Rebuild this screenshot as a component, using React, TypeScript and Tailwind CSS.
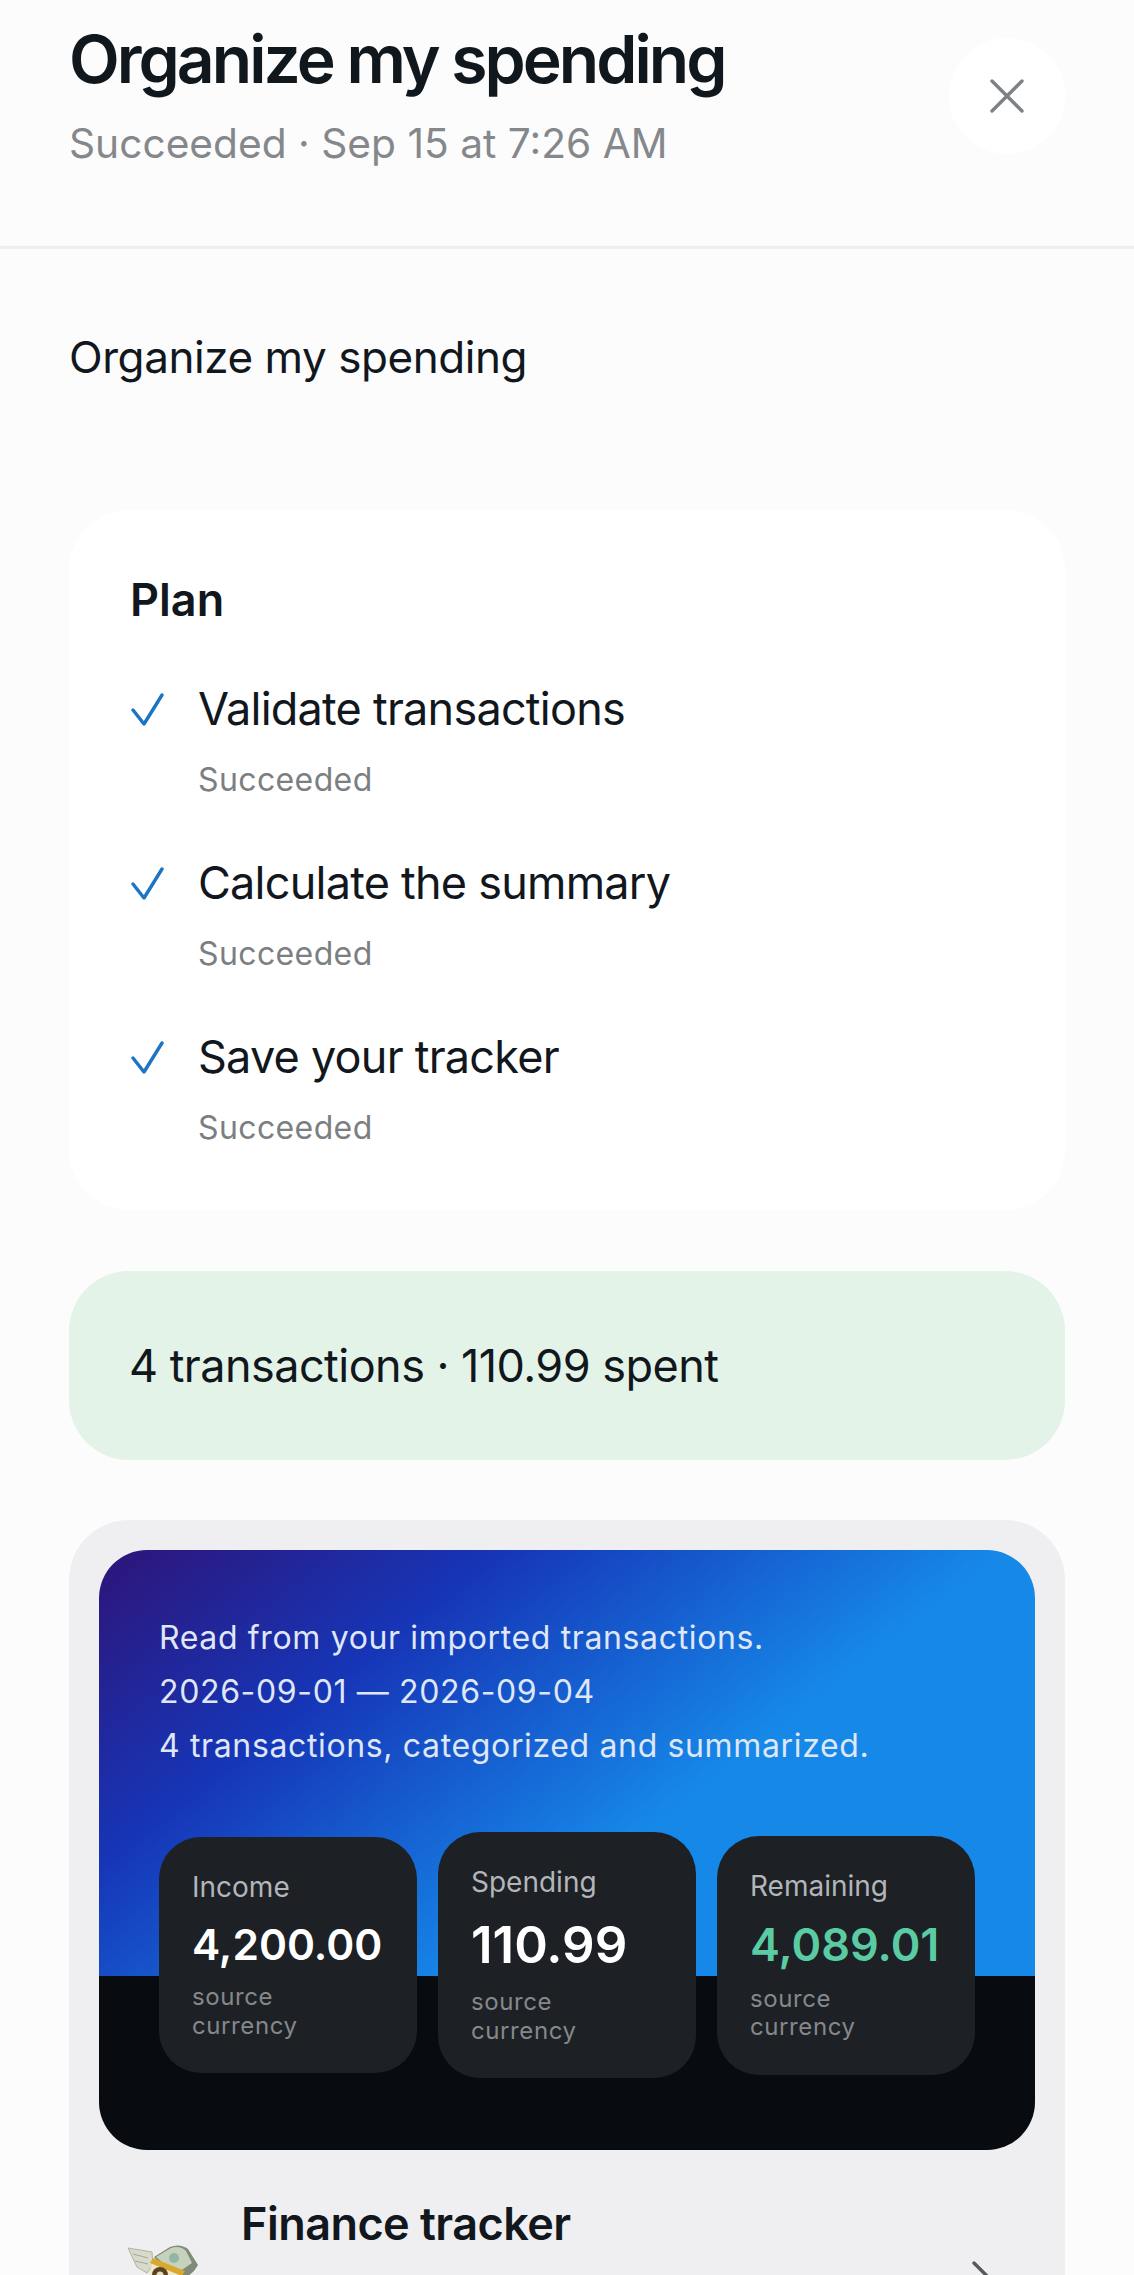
const font = { fontFamily: "Inter, 'Liberation Sans', sans-serif" };

function Check() {
  return (
    <svg width="34" height="34" viewBox="0 0 34 34" fill="none" className="shrink-0">
      <path d="M3 17 L14 31 L32 2" stroke="#1c74c4" strokeWidth="3.4" strokeLinecap="round" strokeLinejoin="round" />
    </svg>
  );
}

function Step({ title }: { title: string }) {
  return (
    <div className="flex gap-[34px]">
      <div className="pt-[18px]"><Check /></div>
      <div>
        <div className="text-[45px] leading-[68px] tracking-[-0.017em] text-[#11171c]">{title}</div>
        <div className="mt-[12px] text-[32px] leading-[50px] tracking-[0.012em] text-[#7c7f82]">Succeeded</div>
      </div>
    </div>
  );
}

function Stat({ label, value, tone, size }: { label: string; value: string; tone: string; size: string }) {
  return (
    <div className="w-[258px] rounded-[42px] bg-[#1d2025] px-[33px] pt-[32px] pb-[33px]">
      <div className="text-[28px] leading-[36px] text-[#b3b5b8]">{label}</div>
      <div className={`mt-[14px] ${size} font-semibold ${tone}`}>{value}</div>
      <div className="mt-[13px] text-[24px] leading-[28.5px] tracking-[0.025em] text-[#85888b]">source<br />currency</div>
    </div>
  );
}

function MoneyWings() {
  return (
    <svg width="72" height="72" viewBox="0 0 72 72" className="shrink-0">
      <path d="M0 3 L24 7 L25 20 L19 28 L9 22 Z" fill="#d9d9cc" stroke="#b1b2a2" strokeWidth="1" />
      <path d="M5 9 L20 13 M7 16 L20 19" stroke="#a7a897" strokeWidth="1" fill="none" />
      <path d="M26 12 L42 2 Q52 -2 60 4 L70 20 L66 26 L50 40 Z" fill="#7f8a78" />
      <path d="M28 12 L43 3 Q52 0 58 6 L64 18 L48 29 Z" fill="#c6d2bc" />
      <circle cx="46" cy="13" r="5" fill="#93b5a5" />
      <path d="M24 18 L54 30 L44 72 L12 72 Z" fill="#f2e8cc" />
      <path d="M25 13 L57 26 L54 31 L22 18 Z" fill="#d9a92f" />
      <circle cx="32" cy="30" r="8" fill="#5a4420" />
      <circle cx="32" cy="30" r="3.5" fill="#e9dfc0" />
    </svg>
  );
}

export default function App() {
  return (
    <div style={font} className="h-[2275px] overflow-hidden bg-[#fcfcfd]">
      <header className="flex h-[249px] items-start justify-between border-b-[3px] border-[#eeeff0] px-[69px]">
        <div>
          <h1 className="mt-[20px] text-[66px] leading-[78px] font-semibold tracking-[-0.045em] text-[#11181d]">Organize my spending</h1>
          <p className="mt-[17px] text-[40.7px] leading-[58px] text-[#85888b]">Succeeded · Sep 15 at 7:26 AM</p>
        </div>
        <button className="mt-[38px] flex h-[116px] w-[116px] items-center justify-center rounded-full bg-white">
          <svg width="34" height="34" viewBox="0 0 34 34" fill="none">
            <path d="M2 2 L32 32 M32 2 L2 32" stroke="#7e8285" strokeWidth="3.4" strokeLinecap="round" />
          </svg>
        </button>
      </header>

      <main className="px-[69px]">
        <p className="mt-[76px] text-[44px] leading-[64px] tracking-[-0.01em] text-[#11171c]">Organize my spending</p>

        <section className="mt-[121px] h-[700px] rounded-[60px] bg-white px-[61px] pt-[60px]">
          <h2 className="text-[45px] leading-[60px] font-semibold text-[#11171c]">Plan</h2>
          <div className="mt-[45px] flex flex-col gap-[44px]">
            <Step title="Validate transactions" />
            <Step title="Calculate the summary" />
            <Step title="Save your tracker" />
          </div>
        </section>

        <section className="mt-[61px] flex h-[189px] items-center rounded-[60px] bg-[#e3f3e8] px-[60px]">
          <span className="text-[45px] tracking-[-0.012em] text-[#11171c]">4 transactions · 110.99 spent</span>
        </section>

        <section className="mt-[60px] rounded-t-[60px] bg-[#efeff1] px-[30px] pt-[30px]">
          <div className="h-[600px] rounded-[48px] bg-[linear-gradient(transparent_426px,#080b0f_426px),linear-gradient(142deg,#2e1478_0%,#1636b8_24%,#1688e8_53%,#1688e8_100%)] px-[60px] pt-[61px]">
            <div className="text-[32px] leading-[54px] tracking-[0.02em] text-[#dfe6f6]">
              <p>Read from your imported transactions.</p>
              <p>2026-09-01 — 2026-09-04</p>
              <p>4 transactions, categorized and summarized.</p>
            </div>
            <div className="mt-[59px] flex items-center gap-[21px]">
              <Stat label="Income" value="4,200.00" tone="text-white" size="text-[42.5px] leading-[51px]" />
              <Stat label="Spending" value="110.99" tone="text-white" size="text-[51px] leading-[61px]" />
              <Stat label="Remaining" value="4,089.01" tone="text-[#5acba3]" size="text-[45px] leading-[54px]" />
            </div>
          </div>
          <div className="mt-[44px] flex items-start pl-[29px]">
            <div className="mt-[51px]"><MoneyWings /></div>
            <div className="ml-[41px] flex-1 text-[45px] leading-[60px] font-semibold tracking-[-0.012em] text-[#11171c]">Finance tracker</div>
            <svg width="24" height="40" viewBox="0 0 24 40" fill="none" className="mt-[66px] mr-[40px]">
              <path d="M3 3 L20 20 L3 37" stroke="#55595c" strokeWidth="3.4" strokeLinecap="round" />
            </svg>
          </div>
        </section>
      </main>
    </div>
  );
}
